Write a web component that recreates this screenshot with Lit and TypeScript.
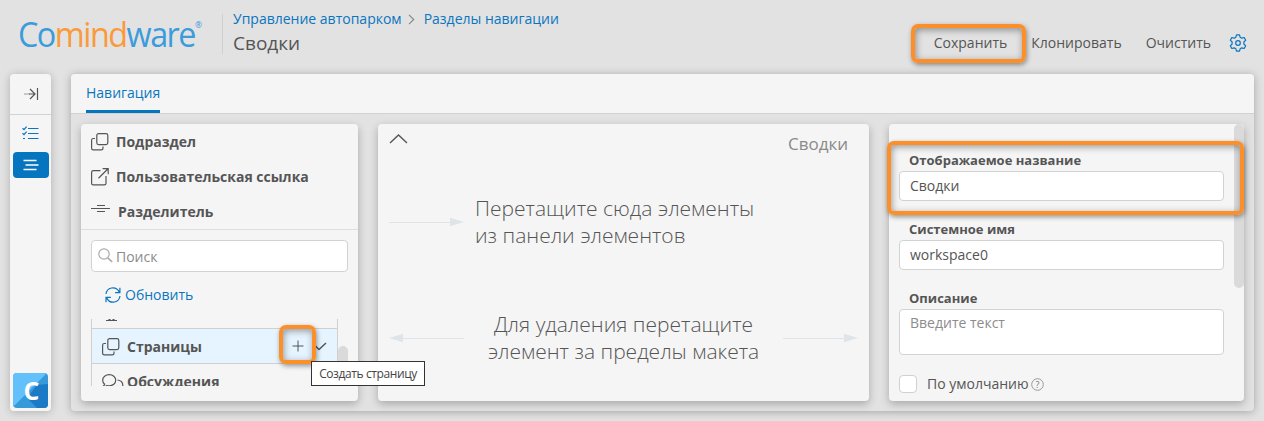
import { LitElement, html, css, svg } from "lit";
import { customElement } from "lit/decorators.js";

const copyIcon = svg`<svg class="ico" width="18" height="18" viewBox="0 0 18 18"><rect x="5.8" y=".6" width="11" height="11" rx="1.8"/><path d="M4 5.5H2.3Q.6 5.5.6 7.2v8Q.6 16.9 2.3 16.9h8q1.7 0 1.7-1.7V13.6"/></svg>`;
const linkIcon = svg`<svg class="ico" width="18" height="18" viewBox="0 0 18 18"><path d="M9.5 2.7H2.3Q.6 2.7.6 4.4v10.8q0 1.7 1.7 1.7h11q1.7 0 1.7-1.7V8M7.5 10.2 17 .8M11.6.6H17.2V6.2"/></svg>`;
const splitIcon = svg`<svg class="ico" width="20" height="10" viewBox="0 0 20 10"><path stroke-width="1" d="M6 1.5h8M0 4.5h19M6 7.5h8"/></svg>`;
const searchIcon = svg`<svg class="ico grey" width="15" height="15" viewBox="0 0 15 15"><circle cx="6" cy="6" r="5.2"/><path d="m9.8 9.8 4.4 4.2" stroke-width="1.7"/></svg>`;
const refreshIcon = svg`<svg class="ico blue" width="16" height="16" viewBox="0 0 16 16"><path d="M1 7a6.9 6.9 0 0 1 12.9-2.6L14.6 5.6M14.9.8v4.9h-4.8M15 9a6.9 6.9 0 0 1-12.9 2.6L1.3 10.4M1 15.2v-4.9h4.9"/></svg>`;
const chatIcon = svg`<svg class="ico" width="22" height="16" viewBox="0 0 22 16"><path d="M.8 12.600c1-.7 1.700-1.400 1.800-2.300A5.400 5.400 0 0 1 .7 6.200C.7 3 3.600.6 7.200.6s6.500 2.400 6.500 5.600-2.900 5.600-6.500 5.600c-.8 0-1.500-.1-2.200-.3-1.300.9-2.700 1.300-4.200 1.100ZM15.500 6c3 .4 5.300 2.600 5.300 5.300 0 1.500-.7 2.800-1.700 3.700l1.600 1.600"/></svg>`;
const gearIcon = svg`<svg class="ico blue" width="18" height="18" viewBox="0 0 18 18"><circle cx="9" cy="9" r="2.300"/><path d="M7.500.9h3l.7 2.400 1.500.9 2.500-.7 1.500 2.700-1.800 1.800v2l1.800 1.800-1.500 2.700-2.500-.7-1.500.9-.7 2.400h-3l-.7-2.400-1.500-.9-2.500.7-1.500-2.700L3.100 10V8L1.300 6.200l1.500-2.700 2.500.7 1.500-.9Z" stroke-linejoin="round"/></svg>`;

@customElement("app-root")
export class AppRoot extends LitElement {
  static styles = css`
    :host { display: flex; flex-direction: column; width: 1264px; height: 421px; overflow: hidden; background: #e2e2e2; color: #555; font: 14px/20px "Open Sans", "Noto Sans", sans-serif; }
    *, *::after { box-sizing: border-box; }
    svg { display: block; flex: none; }
    .ico { fill: none; stroke: #555; stroke-width: 1.2; }
    .blue { stroke: #0a75c0; }
    .grey { stroke: #aaa; }
    .head { height: 74px; flex: none; display: flex; padding: 0 16px 0 18px; }
    .logo { width: 204px; flex: none; padding-top: 11px; }
    .word { font: 34px "Open Sans", sans-serif; letter-spacing: -1.6px; fill: #3b9bdb; }
    .word .or { fill: #fa9a3a; }
    .reg { font: 9px "Open Sans", sans-serif; fill: #3b9bdb; }
    .titles { border-left: 1px solid #d0d0d0; margin-top: 14px; height: 40px; padding-left: 10px; flex: 1; }
    .crumbs { display: flex; align-items: center; height: 10px; color: #0a75c0; }
    .crumbs svg { margin: 0 9px 0 6px; }
    .crumbs .ico { stroke: #888; }
    .title { font-size: 19px; line-height: 26px; margin-top: 6px; }
    .actions { display: flex; align-items: center; height: 86px; }
    .act { position: relative; }
    .act + .act { margin-left: 24px; }
    .actions svg { margin-left: 18px; margin-right: 1px; }
    .mark::after { content: ""; position: absolute; border: 4px solid #fc8f27; border-radius: 7px; box-shadow: 1px 2px 5px rgba(0,0,0,.4), inset 1px 2px 7px rgba(0,0,0,.38); z-index: 3; }
    .save::after { left: -23px; top: -9px; width: 115px; height: 39px; }
    .body { display: flex; gap: 20px; padding: 0 10px 10px; flex: 1; min-height: 0; }
    .side { width: 41px; flex: none; background: #f5f5f5; border-radius: 4px; box-shadow: 0 1px 8px rgba(0,0,0,.22); display: flex; flex-direction: column; align-items: center; }
    .exp { height: 41px; width: 100%; border-bottom: 1px solid #d2d2d2; padding: 12px 0 0 14px; }
    .nav { width: 36px; height: 26px; border-radius: 4px; display: flex; align-items: center; justify-content: center; }
    .n1 { margin-top: 5px; }
    .on { background: #0575c0; margin-top: 6px; }
    .badge { margin: auto 0 3px; width: 35px; height: 35px; border-radius: 4px; overflow: hidden; }
    .badge text { font: 700 25px "Open Sans", sans-serif; fill: #fff; }
    .main { flex: 1; display: flex; flex-direction: column; border-radius: 4px; background: #e2e2e2; box-shadow: 0 1px 8px rgba(0,0,0,.28); }
    .tabs { height: 40px; flex: none; background: #f5f5f5; border-bottom: 1px solid #d2d2d2; border-radius: 4px 4px 0 0; padding-left: 15px; display: flex; }
    .tab { height: 39px; padding-top: 9px; color: #0a75c0; border-bottom: 3px solid #0575c0; }
    .cols { display: flex; gap: 20px; padding: 10px; flex: 1; min-height: 0; }
    .card { background: #f5f5f5; border-radius: 4px; box-shadow: 0 3px 9px rgba(0,0,0,.26); height: 277px; }
    .left { width: 277px; position: relative; }
    .el { height: 35px; padding-left: 10px; display: flex; align-items: center; gap: 7px; font-weight: 700; }
    .sep svg { margin-bottom: 6px; }
    .rule { border-top: 1px solid #dedede; }
    .search { margin: 10px 10px 0; height: 32px; border: 1px solid #d2d2d2; border-radius: 4px; background: #fff; display: flex; align-items: center; gap: 3px; padding: 1px 6px 0; color: #8c8c8c; }
    .search svg { margin-bottom: 2px; }
    .upd { display: flex; align-items: center; gap: 4px; padding-left: 24px; margin-top: 13px; height: 20px; color: #0a75c0; }
    .scroll { display: flex; margin: 14px 10px 0; height: 67px; overflow: hidden; }
    .list { width: 247px; border: solid #d0d0d0; border-width: 0 1px; }
    .thumb { width: 10px; height: 60px; margin-top: 27px; border-radius: 5px; background: #dadada; }
    .cut { height: 9px; padding-left: 14px; }
    .row { height: 35px; padding-left: 10px; display: flex; align-items: center; gap: 7px; font-weight: 700; border-top: 1px solid #d0d0d0; }
    .cur { height: 36px; background: #e6f4ff; border-bottom: 1px solid #d0d0d0; padding-top: 1px; }
    .disc { border: 0; gap: 3px; padding-top: 1px; }
    .plus { margin: 0 0 2px auto; }
    .chev { margin: 0 10px 0 1px; }
    .ring::after { left: 198px; top: 201px; width: 37px; height: 39px; }
    .tip { position: absolute; left: 230px; top: 237px; width: 114px; height: 25px; border: 1px solid #333; background: #fff; color: #444; font-size: 12px; letter-spacing: -.4px; line-height: 24px; text-align: center; white-space: nowrap; z-index: 4; }
    .mid { width: 491px; padding: 9px 11px; }
    .mtop { display: flex; justify-content: space-between; padding: 1px 10px 0 0; }
    .mname { font-size: 17px; line-height: 20px; color: #8a8a8a; font-weight: 500; }
    .hint { display: flex; font-size: 21px; line-height: 27px; font-weight: 300; white-space: nowrap; }
    .h1 { margin-top: 41px; gap: 11px; }
    .h2 { margin-top: 62px; justify-content: space-between; text-align: center; }
    .arr { fill: #dfe4e8; stroke: #dfe4e8; margin-top: 22px; }
    .right { width: 355px; display: flex; justify-content: space-between; padding-left: 10px; position: relative; }
    .ring2::after { left: -2px; top: 17px; width: 357px; height: 74px; }
    .bar { width: 10px; height: 164px; border-radius: 5px; background: #dadada; }
    .form { width: 325px; padding-top: 26px; }
    .lab { font-size: 13px; line-height: 20px; font-weight: 700; padding-left: 10px; height: 21px; }
    .inp { height: 30px; border: 1px solid #d2d2d2; border-radius: 4px; background: #fff; padding: 4px 10px; margin-bottom: 18px; }
    .area { height: 46px; color: #8c8c8c; margin-bottom: 20px; padding-top: 3px; }
    .chk { display: flex; align-items: center; height: 18px; }
    .box { width: 18px; height: 18px; border: 1px solid #d0d0d0; border-radius: 4px; background: #fff; margin-right: 10px; }
    .q { margin-left: 2px; stroke: #999; stroke-width: 1; }
    .q text { font: 9px "Open Sans", sans-serif; fill: #777; stroke: none; }
  `;

  render() {
    return html`
      <div class="head">
        <div class="logo"><svg width="190" height="48" viewBox="0 0 190 48"><text class="word" x="0" y="36" textLength="177" lengthAdjust="spacingAndGlyphs">Co<tspan class="or">mind</tspan>ware</text><text class="reg" x="177" y="17" textLength="7" lengthAdjust="spacingAndGlyphs">®</text></svg></div>
        <div class="titles">
          <div class="crumbs"><span>Управление автопарком</span><svg class="ico" width="7" height="11" viewBox="0 0 7 11"><path d="m1 .8 4.700 4.700L1 10.200"/></svg><span>Разделы навигации</span></div>
          <div class="title">Сводки</div>
        </div>
        <div class="actions"><span class="act save mark">Сохранить</span><span class="act">Клонировать</span><span class="act">Очистить</span>${gearIcon}</div>
      </div>
      <div class="body">
        <div class="side">
          <div class="exp"><svg class="ico" width="16" height="16" viewBox="0 0 16 16"><path d="M0 8h6" stroke="#aaa"/><path d="M5 8h6M6 3l5 5-5 5M13.500 2v12"/></svg></div>
          <div class="nav n1"><svg class="ico blue" width="17" height="14" viewBox="0 0 17 14"><path d="M6 2.500h10.500M6 7.500h10.500M6 12.500h10.500M1 12.500h2M.5 2.300l1.500 1.400L4.600.6M.5 7.300 2 8.700l2.600-3.100"/></svg></div>
          <div class="nav on"><svg width="16" height="12" viewBox="0 0 16 12" fill="none" stroke="#fff" stroke-width="1.400"><path d="M.5 1.500h13M2.500 6h13M.5 10.500h13"/></svg></div>
          <svg class="badge" width="35" height="35" viewBox="0 0 35 35"><path d="M0 0h35v35H0z" fill="#369ada"/><path d="M0 0h34L0 34z" fill="#64c0fa"/><path d="M35 11v24H24L14 25 24 12z" fill="#1b7ac5"/><text x="10.500" y="26.500">C</text></svg>
        </div>
        <div class="main">
          <div class="tabs"><div class="tab">Навигация</div></div>
          <div class="cols">
            <div class="card left mark ring">
              <div class="el">${copyIcon}Подраздел</div>
              <div class="el">${linkIcon}Пользовательская ссылка</div>
              <div class="el sep">${splitIcon}Разделитель</div>
              <div class="rule"></div>
              <div class="search">${searchIcon}Поиск</div>
              <div class="upd">${refreshIcon}Обновить</div>
              <div class="scroll">
                <div class="list">
                  <div class="cut"><svg class="ico" width="11" height="3" viewBox="0 0 11 3"><path d="M0 1.500h11M2.500.500h2M6.500.500h2"/></svg></div>
                  <div class="row cur">${copyIcon}Страницы<svg class="ico plus" width="12" height="12" viewBox="0 0 12 12"><path d="M6 .500v11M.500 6h11" stroke-width="1"/></svg><svg class="ico chev" width="15" height="9" viewBox="0 0 15 9"><path d="m1 1.500 6 6 7-6.500" stroke-width="1.500"/></svg></div>
                  <div class="row disc">${chatIcon}Обсуждения</div>
                </div>
                <div class="thumb"></div>
              </div>
              <div class="tip">Создать страницу</div>
            </div>
            <div class="card mid">
              <div class="mtop"><svg class="ico" width="19" height="10" viewBox="0 0 19 10"><path d="m1 9 8.500-8L18 9" stroke-width="1.400"/></svg><span class="mname">Сводки</span></div>
              <div class="hint h1"><svg class="arr" width="75" height="10" viewBox="0 0 75 10"><path d="M0 5.500h61" /><path d="M61 .800 75 5 61 9.200z" stroke="none"/></svg><div>Перетащите сюда элементы<br>из панели элементов</div></div>
              <div class="hint h2"><svg class="arr" width="75" height="10" viewBox="0 0 75 10"><path d="M14 5.500h61"/><path d="M14 .800 0 5l14 4.200z" stroke="none"/></svg><div>Для удаления перетащите<br>элемент за пределы макета</div><svg class="arr" width="75" height="10" viewBox="0 0 75 10"><path d="M0 5.500h61"/><path d="M61 .800 75 5 61 9.200z" stroke="none"/></svg></div>
            </div>
            <div class="card right mark ring2">
              <div class="form">
                <div class="lab">Отображаемое название</div><div class="inp">Сводки</div>
                <div class="lab">Системное имя</div><div class="inp">workspace0</div>
                <div class="lab">Описание</div><div class="inp area">Введите текст</div>
                <div class="chk"><span class="box"></span>По умолчанию<svg class="ico q" width="13" height="13" viewBox="0 0 13 13"><circle cx="6.500" cy="6.500" r="5.800"/><text x="6.500" y="9.800" text-anchor="middle">?</text></svg></div>
              </div>
              <div class="bar"></div>
            </div>
          </div>
        </div>
      </div>`;
  }
}
